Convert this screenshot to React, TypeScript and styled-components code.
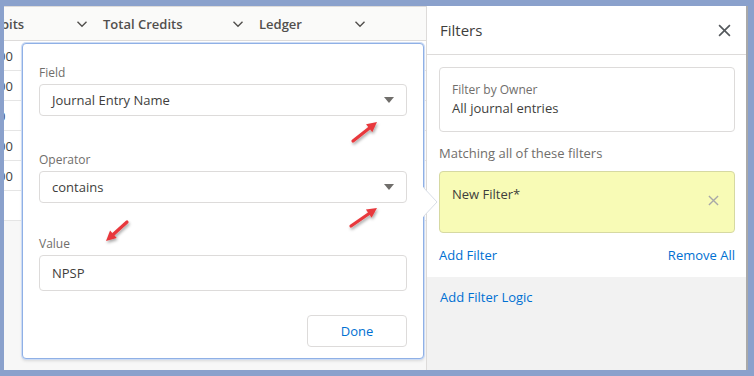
import styled, { createGlobalStyle } from "styled-components";

const GlobalStyle = createGlobalStyle`
  html, body {
    margin: 0;
    padding: 0;
    background: #8aa1cc;
  }
  body {
    font-family: "Open Sans", "Liberation Sans", sans-serif;
    color: #3e3e3c;
  }
`;

const Frame = styled.div`
  position: relative;
  width: 754px;
  height: 376px;
  box-sizing: border-box;
  padding: 6px 6px 6px 4px;
  background: #8aa1cc;
`;

const Screen = styled.div`
  display: flex;
  height: 100%;
  background: #f7f7f7;
  border-right: 2px solid #a9a9a9;
  overflow: hidden;
`;

const TableArea = styled.div`
  position: relative;
  flex: 1;
  min-width: 0;
  display: flex;
  flex-direction: column;
  background: #f7f7f7;
  border-top: 1px solid #dddbda;
`;

const HeaderRow = styled.div`
  display: grid;
  grid-template-columns: 92px 156px 122px 1fr;
  height: 33px;
  background: #fafaf9;
  border-bottom: 1px solid #dddbda;
  overflow: hidden;
`;

const HeaderCell = styled.div<{ $pad: number }>`
  display: flex;
  align-items: center;
  justify-content: space-between;
  padding: 0 8px 0 ${(p) => p.$pad}px;
  font-size: 13px;
  font-weight: 600;
  color: #514f4d;
`;

const Chevron = styled.svg`
  width: 12px;
  height: 12px;
  flex-shrink: 0;
`;

const Body = styled.div`
  background: #ffffff;
  overflow: hidden;
`;

const Row = styled.div`
  height: 29px;
  display: flex;
  align-items: center;
  border-bottom: 1px solid #e5e5e5;
  font-size: 13px;
  color: #3e3e3c;
  margin-left: -6px;
`;

const Popover = styled.div`
  position: absolute;
  z-index: 2;
  left: 18px;
  top: 36px;
  width: 402px;
  height: 316px;
  box-sizing: border-box;
  background: #ffffff;
  border: 1px solid #8fb0e6;
  border-radius: 4px;
  box-shadow: 0 0 0 1px #cddcf4, 0 2px 3px rgba(0, 0, 0, 0.12);
  padding: 20px 16px 0 16px;
  display: flex;
  flex-direction: column;
`;

const Nub = styled.svg`
  position: absolute;
  left: 100%;
  top: 143px;
  width: 15px;
  height: 30px;
`;

const Group = styled.div<{ $top: number }>`
  margin-top: ${(p) => p.$top}px;
  display: flex;
  flex-direction: column;
  gap: 2px;
`;

const Label = styled.label`
  font-size: 12px;
  line-height: 18px;
  color: #706e6b;
`;

const Control = styled.div<{ $h: number }>`
  height: ${(p) => p.$h}px;
  box-sizing: border-box;
  border: 1px solid #dddbda;
  border-radius: 4px;
  display: flex;
  align-items: center;
  justify-content: space-between;
  padding: 0 12px 0 12px;
  font-size: 13px;
  color: #3e3e3c;
`;

const Caret = styled.span`
  width: 0;
  height: 0;
  border-left: 5px solid transparent;
  border-right: 5px solid transparent;
  border-top: 6px solid #706e6b;
`;

const Actions = styled.div`
  display: flex;
  justify-content: flex-end;
  margin-top: 24px;
`;

const DoneButton = styled.button`
  width: 100px;
  height: 32px;
  border: 1px solid #dddbda;
  border-radius: 4px;
  background: #ffffff;
  color: #0070d2;
  font-family: inherit;
  font-size: 13px;
`;

const Panel = styled.div`
  position: relative;
  width: 319px;
  flex-shrink: 0;
  display: flex;
  flex-direction: column;
  background: #f2f2f2;
  border-left: 1px solid #dddbda;
`;

const PanelTop = styled.div`
  background: #ffffff;
`;

const PanelHeader = styled.div`
  height: 48px;
  display: flex;
  align-items: center;
  justify-content: space-between;
  padding: 0 15px 0 13px;
  border-bottom: 1px solid #dddbda;
  font-size: 15px;
  color: #3e3e3c;
`;

const PanelBody = styled.div`
  padding: 12px 11px 13px 12px;
  display: flex;
  flex-direction: column;
`;

const Card = styled.div<{ $yellow?: boolean }>`
  position: relative;
  box-sizing: border-box;
  border: 1px solid ${(p) => (p.$yellow ? "#d6d9a2" : "#dddbda")};
  background: ${(p) => (p.$yellow ? "#f8fbb6" : "#ffffff")};
  border-radius: 4px;
  padding: 13px 12px;
  display: flex;
  justify-content: space-between;
  align-items: flex-start;
`;

const CardText = styled.div`
  display: flex;
  flex-direction: column;
`;

const SmallText = styled.div`
  font-size: 12px;
  line-height: 18px;
  color: #706e6b;
`;

const ValueText = styled.div`
  font-size: 13px;
  line-height: 19px;
  color: #3e3e3c;
`;

const SectionTitle = styled.div`
  font-size: 13px;
  color: #706e6b;
  margin: 12px 0 9px 0;
`;

const Links = styled.div`
  display: flex;
  justify-content: space-between;
  margin-top: 13px;
  line-height: 18px;
`;

const Link = styled.a`
  font-size: 13px;
  color: #0070d2;
  text-decoration: none;
`;

const PanelFooter = styled.div`
  padding: 10px 13px;
  line-height: 18px;
`;

const Annotation = styled.svg`
  position: absolute;
  z-index: 3;
  left: 0;
  top: 0;
  width: 754px;
  height: 376px;
  pointer-events: none;
`;

function ChevronDown() {
  return (
    <Chevron viewBox="0 0 12 12">
      <path d="M1.5 3.8 L6 8.2 L10.5 3.8" fill="none" stroke="#514f4d" strokeWidth="1.4" />
    </Chevron>
  );
}

function CloseIcon({ size, color }: { size: number; color: string }) {
  return (
    <svg width={size} height={size} viewBox="0 0 12 12">
      <path d="M1 1 L11 11 M11 1 L1 11" stroke={color} strokeWidth="1.5" />
    </svg>
  );
}

function Arrow({ x1, y1, x2, y2 }: { x1: number; y1: number; x2: number; y2: number }) {
  const a = Math.atan2(y2 - y1, x2 - x1);
  const len = 10;
  const w = 5;
  const bx = x2 - len * Math.cos(a);
  const by = y2 - len * Math.sin(a);
  const px = -Math.sin(a) * w;
  const py = Math.cos(a) * w;
  return (
    <g filter="url(#arrowShadow)">
      <line x1={x1} y1={y1} x2={bx} y2={by} stroke="#e8393c" strokeWidth="3.2" strokeLinecap="round" />
      <polygon points={`${x2},${y2} ${bx + px},${by + py} ${bx - px},${by - py}`} fill="#e8393c" />
    </g>
  );
}

const rows = ["00", "00", "0", "00", "00", ""];

export default function App() {
  return (
    <>
      <GlobalStyle />
      <Frame>
        <Screen>
          <TableArea>
            <HeaderRow>
              <HeaderCell $pad={0}>
                <span style={{ marginLeft: -3 }}>bits</span>
                <ChevronDown />
              </HeaderCell>
              <HeaderCell $pad={7}>
                <span>Total Credits</span>
                <ChevronDown />
              </HeaderCell>
              <HeaderCell $pad={7}>
                <span>Ledger</span>
                <ChevronDown />
              </HeaderCell>
              <HeaderCell $pad={7} />
            </HeaderRow>
            <Body>
              {rows.map((r, i) => (
                <Row key={i}>{r}</Row>
              ))}
            </Body>
            <Popover>
              <Nub viewBox="0 0 15 30">
                <path d="M0 0 L14 15 L0 30 Z" fill="#ffffff" />
                <path d="M0 0 L14 15 L0 30" fill="none" stroke="#d8dde6" />
              </Nub>
              <Group $top={0}>
                <Label>Field</Label>
                <Control $h={32}>
                  <span>Journal Entry Name</span>
                  <Caret />
                </Control>
              </Group>
              <Group $top={35}>
                <Label>Operator</Label>
                <Control $h={32}>
                  <span>contains</span>
                  <Caret />
                </Control>
              </Group>
              <Group $top={32}>
                <Label>Value</Label>
                <Control $h={36}>
                  <span>NPSP</span>
                </Control>
              </Group>
              <Actions>
                <DoneButton>Done</DoneButton>
              </Actions>
            </Popover>
          </TableArea>
          <Panel>
            <PanelTop>
              <PanelHeader>
                <span>Filters</span>
                <CloseIcon size={13} color="#54585c" />
              </PanelHeader>
              <PanelBody>
                <Card>
                  <CardText>
                    <SmallText>Filter by Owner</SmallText>
                    <ValueText>All journal entries</ValueText>
                  </CardText>
                </Card>
                <SectionTitle>Matching all of these filters</SectionTitle>
                <Card $yellow style={{ height: 62 }}>
                  <ValueText>New Filter*</ValueText>
                  <span style={{ marginTop: 4, marginRight: 3 }}>
                    <CloseIcon size={11} color="#a8a8a8" />
                  </span>
                </Card>
                <Links>
                  <Link>Add Filter</Link>
                  <Link>Remove All</Link>
                </Links>
              </PanelBody>
            </PanelTop>
            <PanelFooter>
              <Link>Add Filter Logic</Link>
            </PanelFooter>
          </Panel>
        </Screen>
        <Annotation viewBox="0 0 754 376">
          <defs>
            <filter id="arrowShadow" x="-50%" y="-50%" width="200%" height="200%">
              <feDropShadow dx="1" dy="2" stdDeviation="1.5" floodColor="#000" floodOpacity="0.35" />
            </filter>
          </defs>
          <Arrow x1={353} y1={141} x2={377} y2={122} />
          <Arrow x1={351} y1={226} x2={377} y2={208} />
          <Arrow x1={127} y1={222} x2={106} y2={241} />
        </Annotation>
      </Frame>
    </>
  );
}
